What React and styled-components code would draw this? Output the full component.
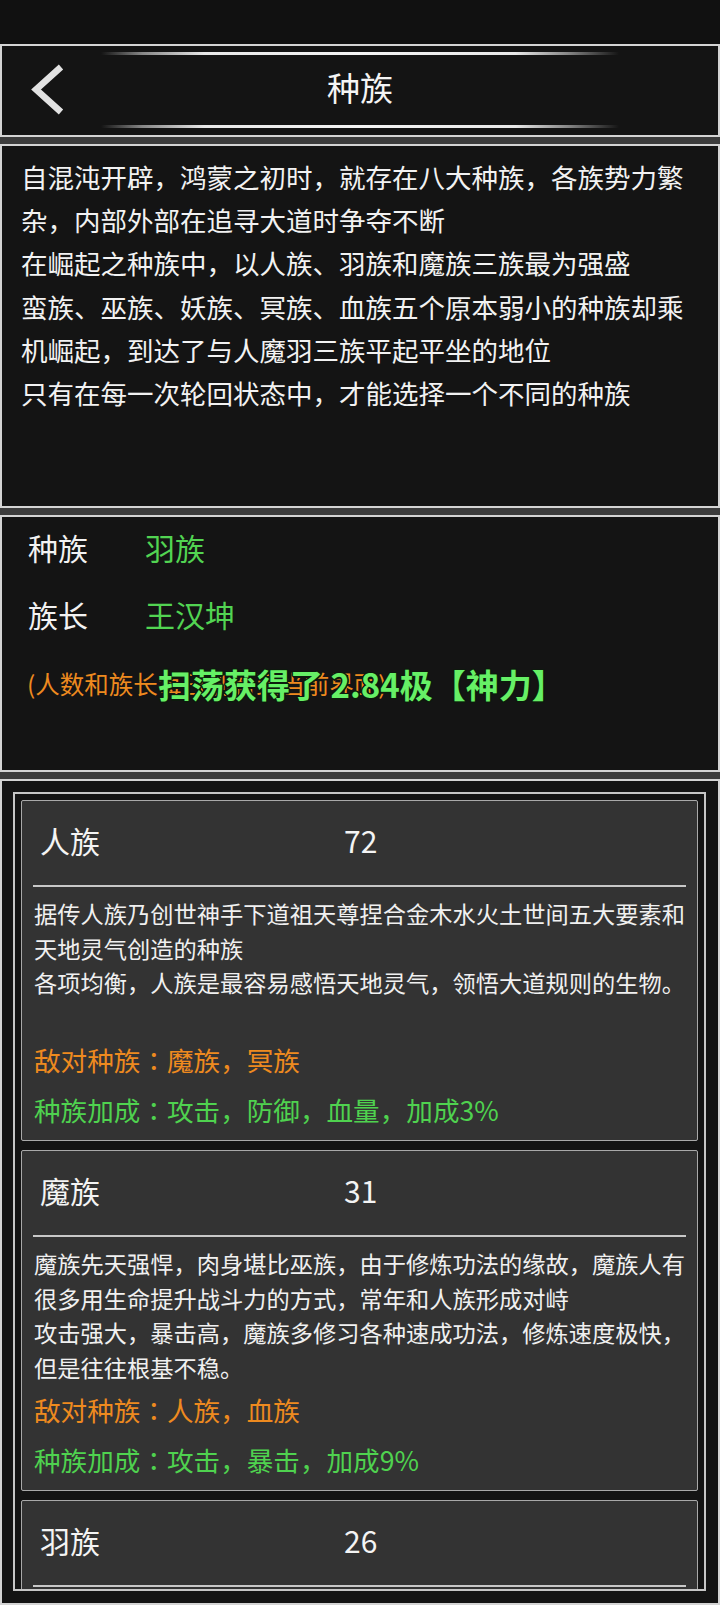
import React from "react";
import styled, { createGlobalStyle } from "styled-components";

const GlobalStyle = createGlobalStyle`
  html, body { margin: 0; padding: 0; background: #3c3c3c; }
  * { box-sizing: border-box; }
`;

const FONT = `"Noto Sans CJK SC", "Noto Sans", "DejaVu Sans", sans-serif`;

const Page = styled.div`
  width: 720px;
  height: 1605px;
  overflow: hidden;
  background: #3c3c3c;
  display: flex;
  flex-direction: column;
  font-family: ${FONT};
  color: #f2f2f2;
`;

const StatusBar = styled.div`
  flex: none;
  height: 44px;
  background: #111111;
`;

const Panel = styled.section`
  flex: ${(p) => (p.$grow ? "1 1 auto" : "none")};
  height: ${(p) => (p.$h ? `${p.$h}px` : "auto")};
  margin-top: ${(p) => p.$mt ?? 7}px;
  border: 2px solid #d4d4d4;
  background: #141414;
  position: relative;
  display: flex;
  flex-direction: column;
  min-height: 0;
`;

/* ---------- header ---------- */
const GlowLine = styled.div`
  flex: none;
  align-self: center;
  width: 518px;
  height: 3px;
  margin: ${(p) => p.$m};
  background: linear-gradient(
    90deg,
    rgba(255, 255, 255, 0) 0%,
    rgba(230, 230, 230, 0.55) 8%,
    #e8e8e8 20%,
    #f4f4f4 50%,
    #e8e8e8 80%,
    rgba(230, 230, 230, 0.55) 90%,
    rgba(255, 255, 255, 0) 100%
  );
`;

const TitleRow = styled.div`
  flex: 1;
  display: grid;
  grid-template-columns: 1fr auto 1fr;
  align-items: center;
`;

const BackButton = styled.button`
  justify-self: start;
  margin-left: 27px;
  padding: 0;
  border: 0;
  background: transparent;
  display: flex;
  cursor: pointer;
`;

const Title = styled.h1`
  margin: 0 0 6px 0;
  font-size: 33px;
  font-weight: 400;
  line-height: 44px;
  color: #f4f4f4;
`;

/* ---------- intro ---------- */
const Intro = styled.div`
  padding: 9px 19px 0 19px;
  font-size: 26.5px;
  line-height: 43.2px;
  color: #f2f2f2;
`;

const IntroLine = styled.p`
  margin: 0;
`;

/* ---------- info ---------- */
const InfoRow = styled.div`
  display: flex;
  align-items: center;
  height: 66.5px;
  padding: 0 0 6px 26px;
  font-size: 30px;
`;

const InfoLabel = styled.span`
  width: 117px;
  color: #f2f2f2;
`;

const InfoValue = styled.span`
  color: #52d452;
`;

const Note = styled.div`
  height: 66px;
  display: flex;
  align-items: center;
  padding-left: 25px;
  font-size: 24.5px;
  color: #ee8a1f;
`;

const Toast = styled.div`
  position: absolute;
  left: 156px;
  top: 147px;
  font-size: 33px;
  font-weight: 700;
  line-height: 40px;
  white-space: nowrap;
  color: #66f066;
  text-shadow:
    1.5px 0 0 #0d1a0d, -1.5px 0 0 #0d1a0d, 0 1.5px 0 #0d1a0d, 0 -1.5px 0 #0d1a0d,
    1px 1px 0 #0d1a0d, -1px -1px 0 #0d1a0d, 1px -1px 0 #0d1a0d, -1px 1px 0 #0d1a0d;
`;

/* ---------- race list ---------- */
const Frame = styled.div`
  flex: 1;
  min-height: 0;
  margin: 11px 12px 12px 11px;
  border: 2px solid #c6c6c6;
  padding: 6px;
  overflow: hidden;
  display: flex;
  flex-direction: column;
  gap: 9px;
`;

const Card = styled.article`
  flex: none;
  border: 1px solid #a9a9a9;
  border-radius: 2px;
  background: #333333;
  padding-bottom: 5px;
`;

const CardHead = styled.div`
  height: 84px;
  display: flex;
  align-items: center;
  padding: 0 0 6px 18px;
  font-size: 30px;
  color: #f4f4f4;
`;

const CardName = styled.span`
  width: 304px;
`;

const CardCount = styled.span``;

const Divider = styled.hr`
  margin: 0 11px 0 11px;
  border: 0;
  height: 2px;
  background: #c8c8c8;
`;

const CardDesc = styled.div`
  margin: 9px 11px 0 12px;
  min-height: 138.8px;
  font-size: 23.25px;
  line-height: 34.7px;
  color: #f0f0f0;
`;

const DescLine = styled.p`
  margin: 0;
`;

const StatLine = styled.div`
  height: 50px;
  line-height: 50px;
  padding-left: 12px;
  font-size: 26.6px;
  white-space: nowrap;
  color: ${(p) => (p.$tone === "enemy" ? "#ee8a1f" : "#4fd24f")};
`;

const Colon = styled.span`
  font-family: "Noto Sans CJK TC", "Noto Sans CJK SC", sans-serif;
`;

const Chevron = () => (
  <svg width="38" height="54" viewBox="0 0 38 54" aria-hidden="true">
    <polyline
      points="32,4 7,26.5 32,49"
      fill="none"
      stroke="#e2e2e2"
      strokeWidth="6.5"
      strokeLinecap="butt"
      strokeLinejoin="miter"
    />
  </svg>
);

const intro = [
  "自混沌开辟，鸿蒙之初时，就存在八大种族，各族势力繁杂，内部外部在追寻大道时争夺不断",
  "在崛起之种族中，以人族、羽族和魔族三族最为强盛",
  "蛮族、巫族、妖族、冥族、血族五个原本弱小的种族却乘机崛起，到达了与人魔羽三族平起平坐的地位",
  "只有在每一次轮回状态中，才能选择一个不同的种族",
];

const races = [
  {
    name: "人族",
    count: 72,
    desc: [
      "据传人族乃创世神手下道祖天尊捏合金木水火土世间五大要素和天地灵气创造的种族",
      "各项均衡，人族是最容易感悟天地灵气，领悟大道规则的生物。",
    ],
    enemy: "魔族，冥族",
    bonus: "攻击，防御，血量，加成3%",
  },
  {
    name: "魔族",
    count: 31,
    desc: [
      "魔族先天强悍，肉身堪比巫族，由于修炼功法的缘故，魔族人有很多用生命提升战斗力的方式，常年和人族形成对峙",
      "攻击强大，暴击高，魔族多修习各种速成功法，修炼速度极快，但是往往根基不稳。",
    ],
    enemy: "人族，血族",
    bonus: "攻击，暴击，加成9%",
  },
  {
    name: "羽族",
    count: 26,
    desc: [
      "羽族生而有翼，身法灵动，擅长御风而行，与天地间风灵之气最为亲近",
      "速度极快，闪避高，羽族修士多以轻灵飘逸的功法见长。",
    ],
    enemy: "妖族，蛮族",
    bonus: "速度，闪避，加成6%",
  },
];

export default function App() {
  return (
    <>
      <GlobalStyle />
      <Page>
        <StatusBar />

        <Panel $mt={0} $h={93}>
          <GlowLine $m="6px 0 0 0" />
          <TitleRow>
            <BackButton aria-label="返回">
              <Chevron />
            </BackButton>
            <Title>种族</Title>
            <span />
          </TitleRow>
          <GlowLine $m="0 0 7px 0" />
        </Panel>

        <Panel $h={364}>
          <Intro>
            {intro.map((t) => (
              <IntroLine key={t}>{t}</IntroLine>
            ))}
          </Intro>
        </Panel>

        <Panel $h={257}>
          <InfoRow>
            <InfoLabel>种族</InfoLabel>
            <InfoValue>羽族</InfoValue>
          </InfoRow>
          <InfoRow>
            <InfoLabel>族长</InfoLabel>
            <InfoValue>王汉坤</InfoValue>
          </InfoRow>
          <Note>(人数和族长每日刷新到当前界面)</Note>
          <Toast>扫荡获得了 2.84极【神力】</Toast>
        </Panel>

        <Panel $grow>
          <Frame>
            {races.map((r) => (
              <Card key={r.name}>
                <CardHead>
                  <CardName>{r.name}</CardName>
                  <CardCount>{r.count}</CardCount>
                </CardHead>
                <Divider />
                <CardDesc>
                  {r.desc.map((d) => (
                    <DescLine key={d}>{d}</DescLine>
                  ))}
                </CardDesc>
                <StatLine $tone="enemy">
                  敌对种族<Colon>：</Colon>
                  {r.enemy}
                </StatLine>
                <StatLine $tone="bonus">
                  种族加成<Colon>：</Colon>
                  {r.bonus}
                </StatLine>
              </Card>
            ))}
          </Frame>
        </Panel>
      </Page>
    </>
  );
}
